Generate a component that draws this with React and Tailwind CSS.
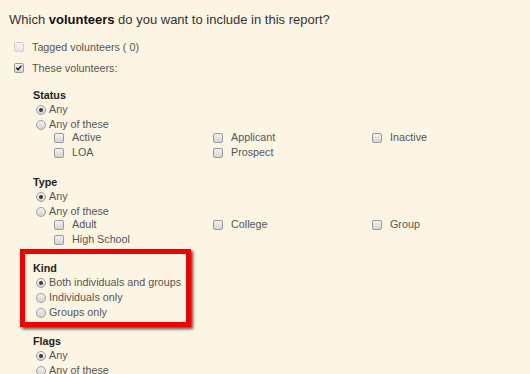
import React from "react";

const font = { fontFamily: '"Liberation Sans", Arial, sans-serif' };

function Checkbox({ checked, disabled }) {
  return (
    <span
      className={
        "inline-block w-[10px] h-[10px] rounded-[2px] border shrink-0 relative " +
        (disabled
          ? "border-[#cfcfcf] bg-gradient-to-b from-[#f4f4f4] to-[#e4e4e4]"
          : "border-[#9a9a9a] bg-gradient-to-b from-[#f2f2f2] to-[#d4d4d4]")
      }
    >
      {checked && (
        <svg viewBox="0 0 10 10" className="absolute left-[0px] top-[0px] w-[8px] h-[8px]">
          <path d="M1.6 4.8 L3.8 7 L8 2" fill="none" stroke="#111" strokeWidth="1.8" />
        </svg>
      )}
    </span>
  );
}

function Radio({ checked }) {
  return (
    <span className="inline-flex items-center justify-center w-[10px] h-[10px] rounded-full border border-[#a0a0a0] bg-gradient-to-b from-[#f3f3f3] to-[#d2d2d2] shrink-0">
      {checked && <span className="block w-[4px] h-[4px] rounded-full bg-[#3a3a3a]" />}
    </span>
  );
}

function RadioRow({ checked, label }) {
  return (
    <div className="h-[15px] flex items-center pl-[3px] gap-[3px]">
      <Radio checked={checked} />
      <span>{label}</span>
    </div>
  );
}

function CbGrid({ items }) {
  return (
    <div className="grid grid-cols-[159px_159px_159px] pl-[21px] -mt-[2px]">
      {items.map((t) => (
        <div key={t} className="h-[15px] flex items-center gap-[8px]">
          <Checkbox />
          <span>{t}</span>
        </div>
      ))}
    </div>
  );
}

function Heading({ children, h = "h-[14px]" }) {
  return <div className={h + " flex items-center font-bold text-[#222]"}>{children}</div>;
}

export default function App() {
  return (
    <div
      style={font}
      className="w-[530px] h-[374px] overflow-hidden bg-[#fdf5e3] text-[10.75px] text-[#555] pl-[9px] pt-[12px]"
    >
      <div className="h-[16px] flex items-center text-[13px] text-[#333]">
        <span>
          Which <b className="text-[#111]">volunteers</b> do you want to include in this report?
        </span>
      </div>

      <div className="mt-[11px] h-[16px] flex items-center gap-[8px] pl-[5px]">
        <Checkbox disabled />
        <span>Tagged volunteers ( 0)</span>
      </div>
      <div className="mt-[5px] h-[16px] flex items-center gap-[8px] pl-[5px]">
        <Checkbox checked />
        <span>These volunteers:</span>
      </div>

      <div className="pl-[24px] mt-[12px]">
        <Heading>Status</Heading>
        <RadioRow checked label="Any" />
        <RadioRow label="Any of these" />
        <CbGrid items={["Active", "Applicant", "Inactive", "LOA", "Prospect"]} />

        <div className="mt-[15px]">
          <Heading>Type</Heading>
          <RadioRow checked label="Any" />
          <RadioRow label="Any of these" />
          <CbGrid items={["Adult", "College", "Group", "High School"]} />
        </div>

        <div className="mt-[2px] -ml-[13px] w-[171px] border-[5px] border-[#f20000] shadow-[2px_2px_3px_rgba(0,0,0,0.7)] pl-[8px] pt-[8px] pb-[2px]">
          <Heading h="h-[13px]">Kind</Heading>
          <RadioRow checked label="Both individuals and groups" />
          <RadioRow label="Individuals only" />
          <RadioRow label="Groups only" />
        </div>

        <div className="mt-[7px]">
          <Heading>Flags</Heading>
          <RadioRow checked label="Any" />
          <RadioRow label="Any of these" />
        </div>
      </div>
    </div>
  );
}
